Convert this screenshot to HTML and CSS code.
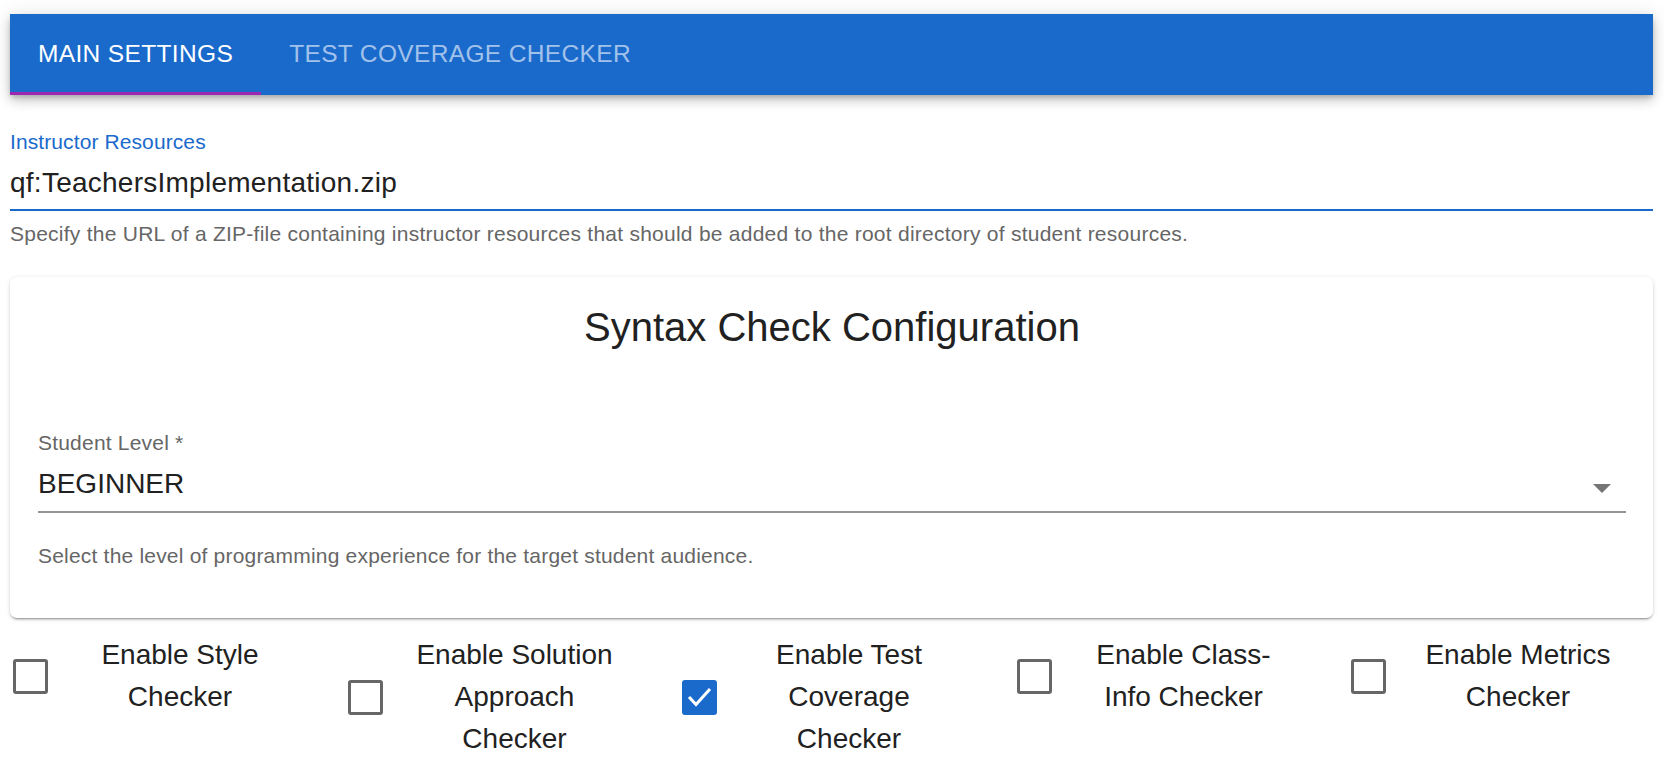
FILE: index.html
```html
<!DOCTYPE html>
<html lang="en">
<head>
<meta charset="utf-8">
<title>Settings</title>
<link rel="stylesheet" href="styles.css">
</head>
<body>
<nav class="tabs">
  <div class="tab tab-active">MAIN SETTINGS</div>
  <div class="tab">TEST COVERAGE CHECKER</div>
</nav>

<div class="field">
  <div class="field-label">Instructor Resources</div>
  <div class="field-input">qf:TeachersImplementation.zip</div>
  <div class="field-hint">Specify the URL of a ZIP-file containing instructor resources that should be added to the root directory of student resources.</div>
</div>

<section class="card">
  <h2 class="card-title">Syntax Check Configuration</h2>
  <div class="select-label">Student Level *</div>
  <div class="select-input">
    <span class="select-value">BEGINNER</span>
    <svg class="select-arrow" width="18" height="9" viewBox="7 10 10 5"><path d="M7 10L12 15L17 10Z" fill="#757575"/></svg>
  </div>
  <div class="select-hint">Select the level of programming experience for the target student audience.</div>
</section>

<div class="checks">
  <div class="check">
    <span class="box"></span>
    <span class="check-label">Enable Style Checker</span>
  </div>
  <div class="check">
    <span class="box"></span>
    <span class="check-label">Enable Solution Approach Checker</span>
  </div>
  <div class="check">
    <span class="box box-checked"><svg width="29" height="29" viewBox="0 0 29 29"><polyline points="5,15 11,21.5 24,7" fill="none" stroke="#fff" stroke-width="3" stroke-linecap="square"/></svg></span>
    <span class="check-label">Enable Test Coverage Checker</span>
  </div>
  <div class="check">
    <span class="box"></span>
    <span class="check-label">Enable Class-Info Checker</span>
  </div>
  <div class="check">
    <span class="box"></span>
    <span class="check-label">Enable Metrics Checker</span>
  </div>
</div>
</body>
</html>
```

FILE: styles.css
```css
html, body {
  margin: 0;
  background: #ffffff;
}
body {
  padding: 14px 11px 0 10px;
  font-family: "Liberation Sans", Arial, Helvetica, sans-serif;
  color: #212121;
  overflow: hidden;
}

.tabs {
  display: flex;
  height: 81px;
  background: #1a6acc;
  box-shadow: 0 3px 5px -1px rgba(0,0,0,.2), 0 6px 10px 0 rgba(0,0,0,.14), 0 1px 18px 0 rgba(0,0,0,.12);
}
.tab {
  position: relative;
  display: flex;
  align-items: center;
  padding: 0 28px 2px 28px;
  font-size: 24.5px;
  letter-spacing: 0.35px;
  color: rgba(255,255,255,.6);
  white-space: nowrap;
}
.tab-active {
  color: #ffffff;
}
.tab-active::after {
  content: "";
  position: absolute;
  left: 0;
  right: 0;
  bottom: 0;
  height: 3px;
  background: #9c27b0;
}

.field {
  margin-top: 36px;
}
.field-label {
  font-size: 21px;
  line-height: 21px;
  letter-spacing: 0.1px;
  color: #1a6acc;
}
.field-input {
  margin-top: 11px;
  font-size: 28px;
  line-height: 40px;
  letter-spacing: 0.25px;
  padding-bottom: 6px;
  border-bottom: 2px solid #1a6acc;
}
.field-hint {
  margin-top: 12px;
  font-size: 21px;
  line-height: 21px;
  letter-spacing: 0.25px;
  color: #666666;
}

.card {
  margin-top: 33px;
  padding: 31px 27px 52px 28px;
  border-radius: 7px;
  background: #fff;
  box-shadow: 0 3px 1px -2px rgba(0,0,0,.2), 0 2px 2px 0 rgba(0,0,0,.14), 0 1px 5px 0 rgba(0,0,0,.12);
}
.card-title {
  margin: 0;
  font-size: 40px;
  line-height: 39px;
  font-weight: 400;
  text-align: center;
  color: #212121;
}
.select-label {
  margin-top: 85px;
  font-size: 21px;
  line-height: 21px;
  letter-spacing: 0.2px;
  color: #666666;
}
.select-input {
  display: flex;
  align-items: center;
  margin-top: 11px;
  padding-bottom: 7px;
  border-bottom: 2px solid #949494;
}
.select-value {
  flex: 1;
  font-size: 28px;
  line-height: 40px;
}
.select-arrow {
  margin: 9px 15px 0 0;
}
.select-hint {
  margin-top: 32px;
  font-size: 21px;
  line-height: 21px;
  letter-spacing: 0.2px;
  color: #666666;
}

.checks {
  display: flex;
  align-items: flex-start;
  gap: 57px;
  margin-top: 16px;
}
.check {
  display: flex;
  align-items: center;
  width: 277.5px;
  flex: none;
}
.box {
  flex: none;
  width: 35px;
  height: 35px;
  margin-left: 3px;
  box-sizing: border-box;
  border: 3px solid #666666;
  border-radius: 3px;
}
.box-checked {
  border-color: #1a6acc;
  background: #1a6acc;
  display: flex;
}
.check-label {
  width: 215px;
  margin-left: 24.5px;
  text-align: center;
  font-size: 28px;
  line-height: 42px;
  color: #212121;
}
```
